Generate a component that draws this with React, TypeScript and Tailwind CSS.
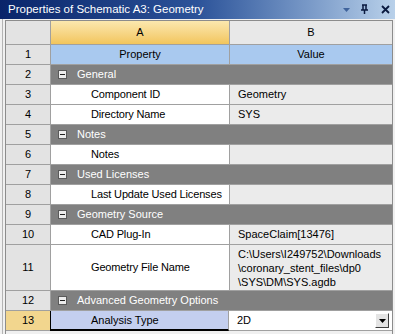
import React from "react";

const font = { fontFamily: '"Liberation Sans", Arial, sans-serif' };

type Row =
  | { n: number; kind: "cat"; label: string }
  | { n: number; kind: "prop"; label: string; value: string[]; h?: string };

const ROWS: Row[] = [
  { n: 2, kind: "cat", label: "General" },
  { n: 3, kind: "prop", label: "Component ID", value: ["Geometry"] },
  { n: 4, kind: "prop", label: "Directory Name", value: ["SYS"] },
  { n: 5, kind: "cat", label: "Notes" },
  { n: 6, kind: "prop", label: "Notes", value: [] },
  { n: 7, kind: "cat", label: "Used Licenses" },
  { n: 8, kind: "prop", label: "Last Update Used Licenses", value: [] },
  { n: 9, kind: "cat", label: "Geometry Source" },
  { n: 10, kind: "prop", label: "CAD Plug-In", value: ["SpaceClaim[13476]"] },
  {
    n: 11,
    kind: "prop",
    label: "Geometry File Name",
    value: [
      "C:\\Users\\I249752\\Downloads",
      "\\coronary_stent_files\\dp0",
      "\\SYS\\DM\\SYS.agdb",
    ],
    h: "h-[46px]",
  },
  { n: 12, kind: "cat", label: "Advanced Geometry Options" },
];

const MinusBox = () => (
  <div className="w-[9px] h-[9px] bg-[#ececec] border border-[#5a5a5a] flex items-center justify-center mr-[10px]">
    <div className="w-[5px] h-[1px] bg-[#202020]" />
  </div>
);

const NumCell = ({ n, cls = "bg-[#e3e3e3]" }: { n: number | string; cls?: string }) => (
  <div
    className={`${cls} w-[45px] shrink-0 border-r border-b border-[#a0a0a0] flex items-center justify-center`}
  >
    {n}
  </div>
);

const PropRow = ({ row }: { row: Row }) => {
  if (row.kind === "cat") {
    return (
      <div className="flex h-[20px]">
        <NumCell n={row.n} />
        <div className="flex-1 bg-[#808080] text-white flex items-center pl-[7px] border-b border-[#a0a0a0]">
          <MinusBox />
          {row.label}
        </div>
      </div>
    );
  }
  return (
    <div className={`flex ${row.h ?? "h-[20px]"}`}>
      <NumCell n={row.n} />
      <div className="w-[179px] shrink-0 bg-white border-r border-b border-[#a0a0a0] flex items-center pl-[40px] whitespace-nowrap overflow-hidden tracking-[-0.15px]">
        {row.label}
      </div>
      <div
        className={`flex-1 bg-[#ebebeb] border-b border-[#a0a0a0] pl-[8px] flex flex-col justify-center ${
          row.value.length > 1 ? "leading-[14px]" : ""
        }`}
      >
        {row.value.map((v, i) => (
          <div key={i}>{v}</div>
        ))}
      </div>
    </div>
  );
};

export default function App() {
  return (
    <div
      className="w-[395px] h-[334px] bg-[#f0f0f0] text-[11px] text-black overflow-hidden"
      style={font}
    >
      {/* Title bar */}
      <div className="h-[19px] flex items-center bg-gradient-to-r from-[#0a246a] via-[#2c5399] to-[#b9d1ea] text-white text-[11.5px] pl-[8px] pr-[5px]">
        <span className="flex-1">Properties of Schematic A3: Geometry</span>
        <svg width="9" height="6" viewBox="0 0 9 6" className="mr-[9px]">
          <path d="M1 1 L8 1 L4.5 5 Z" fill="#3f639c" />
        </svg>
        <svg width="9" height="11" viewBox="0 0 9 11" className="mr-[12px]">
          <path d="M2 1 H7 M3 1 V6 M6 1 V6 M1 6 H8 M4.5 6 V10" stroke="#0a1a40" strokeWidth="1.5" fill="none" />
        </svg>
        <svg width="9" height="9" viewBox="0 0 9 9">
          <path d="M1 1 L8 8 M8 1 L1 8" stroke="#0a1a40" strokeWidth="1.8" />
        </svg>
      </div>

      {/* Grid frame */}
      <div className="flex">
        <div className="w-[2px] shrink-0" />
        <div className="w-[1px] shrink-0 h-[315px] bg-[#b4b4b4]" />
        <div className="w-[2px] shrink-0" />
        <div className="mt-[1px] w-[388px] border-l border-t border-r border-[#8c8c8c]">
          {/* header */}
          <div className="flex h-[24px]">
            <NumCell n="" cls="bg-[#e3e3e3]" />
            <div className="w-[179px] shrink-0 bg-gradient-to-b from-[#fbe8ae] to-[#f2c55c] border-r border-b border-[#a0a0a0] flex items-center justify-center">
              A
            </div>
            <div className="flex-1 bg-[#e8e8e8] border-b border-[#a0a0a0] flex items-center justify-center">
              B
            </div>
          </div>
          {/* row 1 */}
          <div className="flex h-[20px]">
            <NumCell n={1} />
            <div className="w-[179px] shrink-0 bg-[#a9c9ef] border-r border-b border-[#a0a0a0] flex items-center justify-center">
              Property
            </div>
            <div className="flex-1 bg-[#a9c9ef] border-b border-[#a0a0a0] flex items-center justify-center">
              Value
            </div>
          </div>
          {ROWS.map((r) => (
            <PropRow key={r.n} row={r} />
          ))}
          {/* row 13 selected */}
          <div className="flex h-[20px]">
            <NumCell n={13} cls="bg-[#f2d68e]" />
            <div className="w-[179px] shrink-0 bg-[#c4cfef] border-l border-b-2 border-black -ml-[1px] border-r border-r-[#a0a0a0] flex items-center pl-[40px]">
              Analysis Type
            </div>
            <div className="flex-1 bg-white border-b border-[#a0a0a0] pl-[8px] pr-[3px] flex items-center">
              <span className="flex-1">2D</span>
              <div className="w-[14px] h-[15px] bg-[#e4e4e4] border border-t-white border-l-white border-r-[#404040] border-b-[#404040] flex items-center justify-center">
                <svg width="7" height="4" viewBox="0 0 7 4">
                  <path d="M0 0 H7 L3.5 4 Z" fill="#000" />
                </svg>
              </div>
            </div>
          </div>
        </div>
      </div>
    </div>
  );
}
